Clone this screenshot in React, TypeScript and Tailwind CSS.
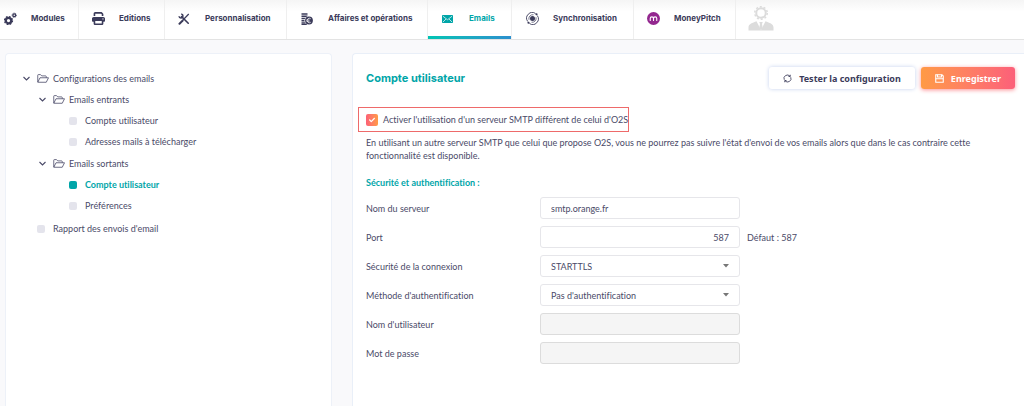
import { useState } from 'react';
import { FaPrint } from 'react-icons/fa6';
import { FaCheck } from 'react-icons/fa';
import type { ReactNode } from 'react';

const GearsIcon = () => (
  <svg viewBox="0 0 26 26" className="w-[13px] h-[13px]" fill="none" stroke="currentColor">
    <circle cx="9" cy="17" r="5.500" strokeWidth="4.500" />
    <circle cx="9" cy="17" r="8" strokeWidth="2.600" strokeDasharray="3.400 2.880" />
    <circle cx="20.500" cy="6.500" r="2.800" strokeWidth="2.600" />
    <circle cx="20.500" cy="6.500" r="4.400" strokeWidth="1.600" strokeDasharray="1.900 1.550" />
  </svg>
);

const ToolsIcon = () => (
  <svg viewBox="0 0 24 24" className="w-3 h-3" fill="none" stroke="currentColor">
    <path d="M21.500 2 L9 15" strokeWidth="2.400" />
    <path d="M3 21.500 L9 15.500" strokeWidth="4" strokeLinecap="round" />
    <path d="M7 7 L20.500 20.500" strokeWidth="3.200" strokeLinecap="round" />
    <path d="M6.500 2 A4 4 0 1 1 2 6.500" strokeWidth="3" />
  </svg>
);

const EuroStackIcon = () => (
  <svg viewBox="0 0 24 24" className="w-3 h-3" fill="none">
    <path d="M1 2h12M1 6.500h12M1 11h9M1 15.500h8M1 20h9M1 23.500h11" stroke="currentColor" strokeWidth="3.400" />
    <circle cx="16" cy="15" r="9" fill="#fff" />
    <circle cx="16" cy="15" r="7.800" fill="currentColor" />
    <path d="M19.500 11.500a4.500 4.500 0 1 0 0 7M11 14h6M11 16.500h6" stroke="#fff" strokeWidth="1.500" />
  </svg>
);

const MailIcon = () => (
  <svg viewBox="0 0 22 16" className="w-[11px] h-2" fill="none">
    <rect width="22" height="16" rx="1.500" fill="#00a5a8" />
    <path d="M2 2.500l9 7 9-7M2 14l6-6M20 14l-6-6" stroke="#fff" strokeWidth="1.400" />
  </svg>
);

const SyncIcon = () => (
  <svg viewBox="0 0 26 26" className="w-[13px] h-[13px]" fill="none" stroke="currentColor">
    <circle cx="13" cy="13" r="5" fill="currentColor" stroke="none" />
    <path d="M19 3A11.300 11.300 0 0 0 3.500 19M7 23A11.300 11.300 0 0 0 22.500 7" strokeWidth="1.800" />
    <path d="M6 15.500a8 8 0 0 1 9-10M20 10.500a8 8 0 0 1-9 10" strokeWidth="1.400" />
    <circle cx="21" cy="4.500" r="2.200" fill="currentColor" stroke="none" />
    <circle cx="5" cy="21.500" r="2.200" fill="currentColor" stroke="none" />
  </svg>
);

const MoneyPitchIcon = () => (
  <svg viewBox="0 0 26 26" className="w-[13px] h-[13px]" fill="none">
    <circle cx="13" cy="13" r="13" fill="#93278f" />
    <path d="M6.500 17v-4a3.200 3.200 0 0 1 6.500 0v4M13 13a3.200 3.200 0 0 1 6.500 0v4" stroke="#fff" strokeWidth="2.200" strokeLinecap="round" />
  </svg>
);

const AvatarIcon = () => (
  <svg viewBox="0 0 52 50" className="w-[26px] h-[25px]" fill="#dcdcdc">
    <circle cx="26" cy="14" r="9.500" fill="none" stroke="#dcdcdc" strokeWidth="4" />
    <circle cx="26" cy="14" r="12.500" fill="none" stroke="#dcdcdc" strokeWidth="3" strokeDasharray="4 3.850" />
    <path d="M1 49v-6c0-6 5-8.500 16-12.500L26 48l9-17.500C46 34.500 51 37 51 43v6z" />
    <path d="M22.500 32h7l-1.500 4 1.500 8-3.500 4-3.500-4 1.500-8z" />
  </svg>
);

const ChevronIcon = () => (
  <svg viewBox="0 0 14 14" className="w-[7px] h-[7px] mr-[7px]" fill="none" stroke="currentColor" strokeWidth="2.200">
    <path d="M1 4l6 6 6-6" />
  </svg>
);

const FolderIcon = () => (
  <svg viewBox="0 0 24 18" className="w-3 h-[9px]" fill="none" stroke="currentColor" strokeWidth="1.600" strokeLinejoin="round">
    <path d="M1.500 16V2.500a1.300 1.300 0 0 1 1.300-1.300H7l2.500 2.600h7.700a1.300 1.300 0 0 1 1.300 1.300v2.400" />
    <path d="M1.500 16.500 6 7.500h17l-4.500 9z" />
  </svg>
);

const RefreshIcon = () => (
  <svg viewBox="0 0 18 18" className="w-[9px] h-[9px]" fill="none" stroke="currentColor" strokeWidth="1.700">
    <path d="M2.500 11.500A6.800 6.800 0 0 1 14 4.500M15.500 6.500A6.800 6.800 0 0 1 4 13.500" />
    <path d="M14.500 1.500v3.500H11M3.500 16.500V13H7" />
  </svg>
);

const SaveIcon = () => (
  <svg viewBox="0 0 18 18" className="w-[9px] h-[9px]" fill="none" stroke="currentColor" strokeWidth="2.200">
    <path d="M1.500 1.500h12.500l2.500 2.500v12.500h-15z" />
    <path d="M5 1.500v4.500h8V1.500M1.500 9.500h15" />
  </svg>
);

type NavItem = { label: string; icon: ReactNode; width: string };

const NAV: NavItem[] = [
  { label: 'Modules', icon: <GearsIcon />, width: 'w-[79px] pl-1' },
  { label: 'Editions', icon: <FaPrint className="w-[13px] h-[13px]" />, width: 'w-[86px] pl-[13px]' },
  { label: 'Personnalisation', icon: <ToolsIcon />, width: 'w-[122px] pl-[13px]' },
  { label: 'Affaires et opérations', icon: <EuroStackIcon />, width: 'w-[141px] pl-[14px]' },
  { label: 'Emails', icon: <MailIcon />, width: 'w-[84px] pl-[14px]' },
  { label: 'Synchronisation', icon: <SyncIcon />, width: 'w-[122px] pl-[14px]' },
  { label: 'MoneyPitch', icon: <MoneyPitchIcon />, width: 'w-[102px] pl-[13px]' },
];

const Folder = ({ label, children }: { label: string; children: ReactNode }) => (
  <li>
    <button className="flex items-center h-[21px]">
      <ChevronIcon />
      <FolderIcon />
      <span className="ml-1">{label}</span>
    </button>
    <ul className="pl-4 pb-px">{children}</ul>
  </li>
);

const Leaf = ({ label, active }: { label: string; active?: boolean }) => (
  <li className="flex items-center h-[21px] pl-[14px]">
    <span className={`w-2 h-2 rounded-xs ${active ? 'bg-[#00a5a8]' : 'bg-[#e4e4ec]'}`} />
    <a href="#" className={`ml-2 ${active ? 'font-bold text-[#00a5a8]' : ''}`}>{label}</a>
  </li>
);

const FIELD = 'w-[200px] h-[22px] px-[10px] border rounded-[3px] outline-none';
const FIELD_ON = 'border-[#e6e6ea] bg-white';
const FIELD_OFF = 'border-[#dcdcdc] bg-[#f5f5f5]';

const Row = ({ id, label, children }: { id: string; label: string; children: ReactNode }) => (
  <div className="flex items-center">
    <label htmlFor={id} className="w-[174px]">{label}</label>
    {children}
  </div>
);

const SelectBox = ({ id, options }: { id: string; options: string[] }) => (
  <div className="relative">
    <select id={id} className={`${FIELD} ${FIELD_ON} appearance-none block`}>
      {options.map(o => <option key={o}>{o}</option>)}
    </select>
    <svg viewBox="0 0 6 4" className="absolute right-[11px] top-[9px] w-[6px] h-1 pointer-events-none" fill="#777">
      <path d="M0 0h6L3 3.500z" />
    </svg>
  </div>
);

export default function App() {
  const [smtp, setSmtp] = useState(true);
  const [server, setServer] = useState('smtp.orange.fr');
  const [port, setPort] = useState('587');

  return (
    <div className="flex flex-col min-h-screen bg-[#f9f9fb] text-[#4a4a68] text-[9px] leading-[13px] font-['Lato','Noto_Sans_CJK_SC',sans-serif] [font-variant-ligatures:none]">
      {/* Main navigation */}
      <nav className="flex h-10 border-b border-[#e3e3e3] bg-linear-to-b from-[#f5f5f5] to-white to-30% font-['Inter',sans-serif] font-bold text-[8px] text-[#3b3b5a]">
        {NAV.map(({ label, icon, width }) => {
          const active = label === 'Emails';
          return (
            <a key={label} href="#" className={`relative flex items-center shrink-0 border-r border-[#efefef] pb-[2px] ${width} ${active ? 'text-[#00a5a8]' : ''}`}>
              <span className="w-[27px]">{icon}</span>
              <span className="whitespace-nowrap">{label}</span>
              {active && <span className="absolute inset-x-0 bottom-0 h-[3px] bg-linear-to-r from-[#00c4b3] to-[#2b8fce]" />}
            </a>
          );
        })}
        <button className="pl-3 pb-[2px]" aria-label="Profil"><AvatarIcon /></button>
      </nav>

      <div className="flex flex-1 gap-5 pt-[13px] pl-[5px]">
        {/* Settings tree */}
        <aside className="w-[327px] shrink-0 pt-[14px] pl-[17px] rounded-t-sm bg-white border border-b-0 border-[#edf1f8]">
          <ul>
            <Folder label="Configurations des emails">
              <Folder label="Emails entrants">
                <Leaf label="Compte utilisateur" />
                <Leaf label="Adresses mails à télécharger" />
              </Folder>
              <Folder label="Emails sortants">
                <Leaf label="Compte utilisateur" active />
                <Leaf label="Préférences" />
              </Folder>
            </Folder>
            <Leaf label="Rapport des envois d'email" />
          </ul>
        </aside>

        {/* Account form */}
        <main className="flex-1 min-w-0 pt-[13px] pl-[13px] pr-[9px] rounded-tl-sm bg-white border border-r-0 border-b-0 border-[#e9eff8]">
          <header className="flex items-center gap-[6px]">
            <h1 className="flex-1 font-['Inter',sans-serif] font-bold text-[11px] text-[#00a5a8]">Compte utilisateur</h1>
            <button className="flex items-center gap-[7px] h-[22px] px-[14px] rounded-[3px] bg-white shadow-[0_0_4px_#c5d2ee] font-['Noto_Sans',sans-serif] font-bold text-[9px] text-[#3b3b5a]">
              <RefreshIcon />Tester la configuration
            </button>
            <button className="flex items-center gap-[7px] h-[22px] px-[14px] rounded-[3px] bg-linear-to-r from-[#ff9a44] to-[#fc5f79] shadow-[0_1px_4px_#fc8f95] font-['Noto_Sans',sans-serif] font-bold text-[9px] text-white">
              <SaveIcon />Enregistrer
            </button>
          </header>

          <label className="flex items-center w-[271px] h-[25px] mt-[18px] -ml-2 pl-[7px] border border-[#ee6a6a]">
            <span className="relative flex w-3 h-3 mr-[5px]">
              <input type="checkbox" checked={smtp} onChange={e => setSmtp(e.target.checked)}
                className="appearance-none w-3 h-3 rounded-xs bg-linear-to-r from-[#fc6076] to-[#ff9a44]" />
              {smtp && <FaCheck className="absolute inset-[3px] w-[6px] h-[6px] text-white pointer-events-none" />}
            </span>
            <span className="whitespace-nowrap">Activer l'utilisation d'un serveur SMTP différent de celui d'O2S</span>
          </label>

          <p className="mt-1 max-w-[620px]">
            En utilisant un autre serveur SMTP que celui que propose O2S, vous ne pourrez pas suivre l'état d'envoi de vos emails alors que dans le cas contraire cette fonctionnalité est disponible.
          </p>

          <h2 className="mt-[14px] font-bold text-[#00a5a8]">Sécurité et authentification :</h2>

          <form className="flex flex-col gap-[7px] mt-2">
            <Row id="server" label="Nom du serveur">
              <input id="server" value={server} onChange={e => setServer(e.target.value)} className={`${FIELD} ${FIELD_ON}`} />
            </Row>
            <Row id="port" label="Port">
              <input id="port" value={port} onChange={e => setPort(e.target.value)} className={`${FIELD} ${FIELD_ON} text-right`} />
              <span className="ml-[7px]">Défaut : 587</span>
            </Row>
            <Row id="security" label="Sécurité de la connexion">
              <SelectBox id="security" options={['STARTTLS', 'SSL/TLS', 'Aucune']} />
            </Row>
            <Row id="method" label="Méthode d'authentification">
              <SelectBox id="method" options={["Pas d'authentification", 'Mot de passe normal']} />
            </Row>
            <Row id="user" label="Nom d'utilisateur">
              <input id="user" disabled className={`${FIELD} ${FIELD_OFF}`} />
            </Row>
            <Row id="password" label="Mot de passe">
              <input id="password" type="password" disabled className={`${FIELD} ${FIELD_OFF}`} />
            </Row>
          </form>
        </main>
      </div>
    </div>
  );
}
